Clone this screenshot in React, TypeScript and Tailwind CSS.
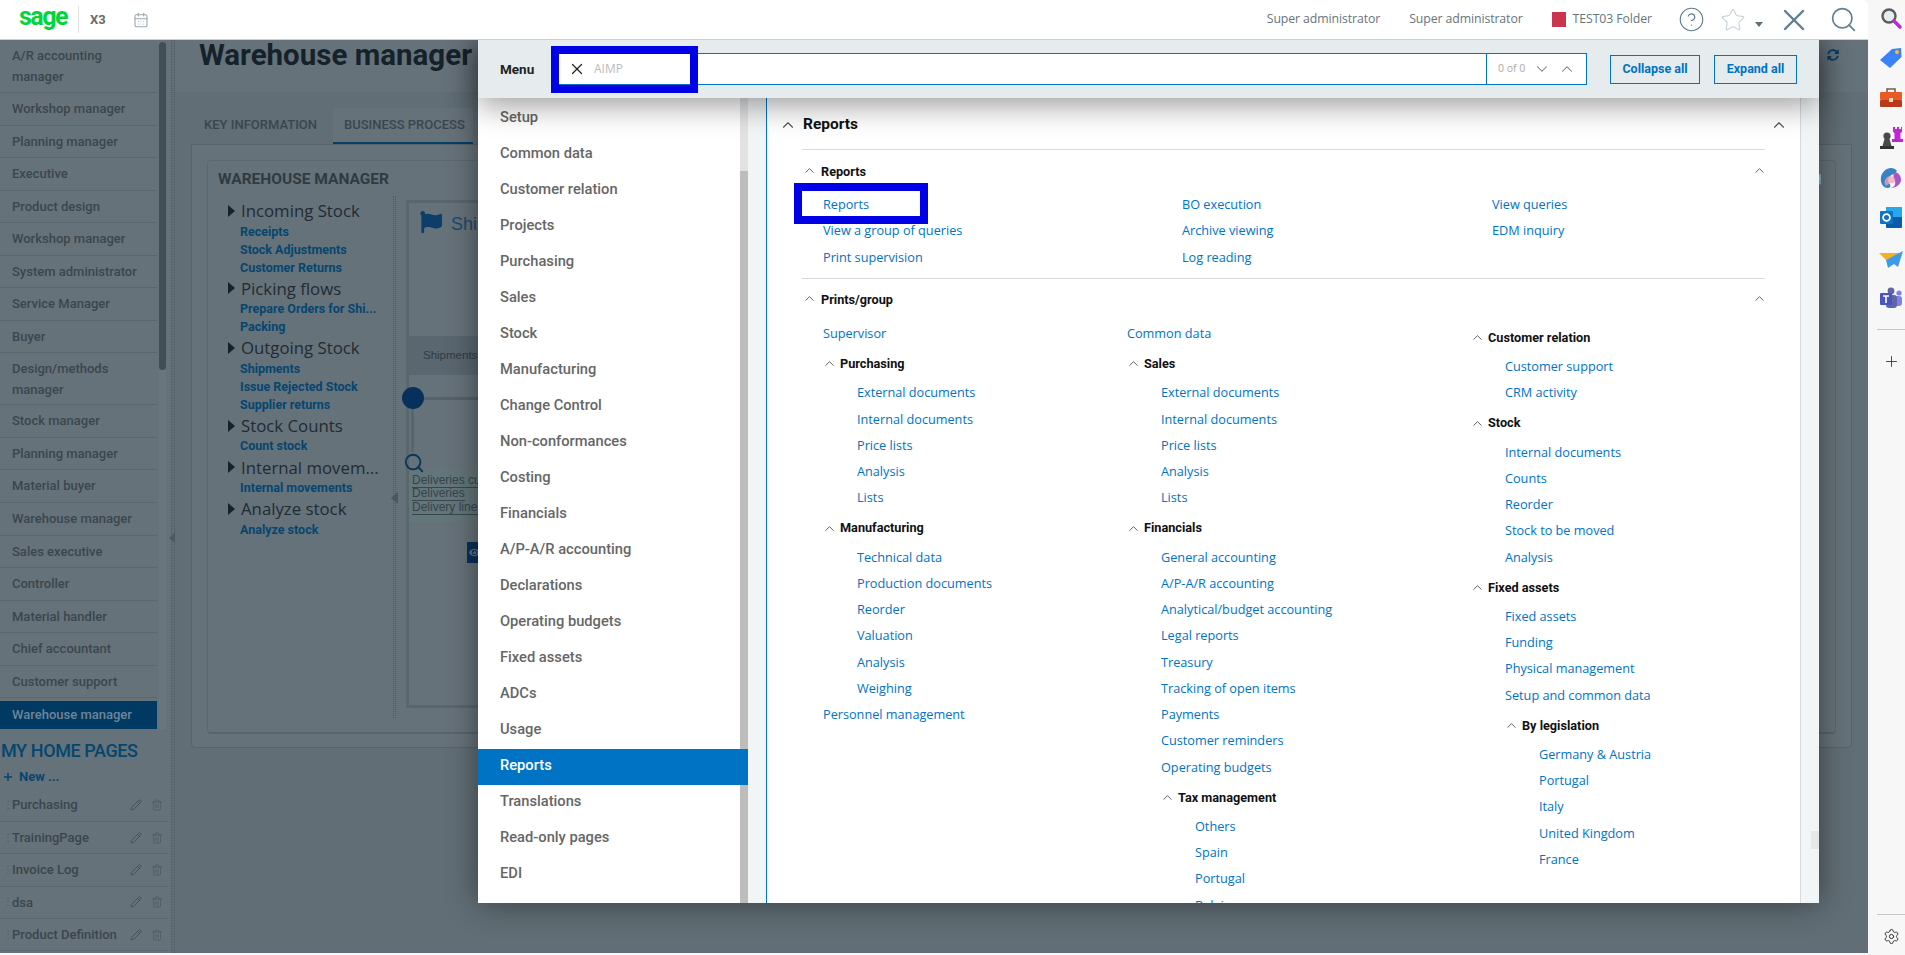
import { CalendarDays, ChevronDown, ChevronUp, Pencil, Plus, Search, Settings, Star, Trash2, X, CircleHelp } from 'lucide-react';
import { FaEye, FaFlag, FaSyncAlt } from 'react-icons/fa';

const OPEN = "font-['Open_Sans',sans-serif]";
const SAGE = "font-['Roboto',sans-serif]";

const roles = [
  'Workshop manager', 'Planning manager', 'Executive', 'Product design', 'Workshop manager',
  'System administrator', 'Service Manager', 'Buyer',
];
const roles2 = [
  'Stock manager', 'Planning manager', 'Material buyer', 'Warehouse manager', 'Sales executive',
  'Controller', 'Material handler', 'Chief accountant', 'Customer support',
];
const homePages = ['Purchasing', 'TrainingPage', 'Invoice Log', 'dsa', 'Product Definition'];

const flows = [
  { title: 'Incoming Stock', links: ['Receipts', 'Stock Adjustments', 'Customer Returns'] },
  { title: 'Picking flows', links: ['Prepare Orders for Shi...', 'Packing'] },
  { title: 'Outgoing Stock', links: ['Shipments', 'Issue Rejected Stock', 'Supplier returns'] },
  { title: 'Stock Counts', links: ['Count stock'] },
  { title: 'Internal movem...', links: ['Internal movements'] },
  { title: 'Analyze stock', links: ['Analyze stock'] },
];

const menu = [
  'Setup', 'Common data', 'Customer relation', 'Projects', 'Purchasing', 'Sales', 'Stock', 'Manufacturing',
  'Change Control', 'Non-conformances', 'Costing', 'Financials', 'A/P-A/R accounting', 'Declarations',
  'Operating budgets', 'Fixed assets', 'ADCs', 'Usage', 'Reports', 'Translations', 'Read-only pages', 'EDI',
];

type Node = { text: string; children?: Node[]; head?: boolean };

const l = (...names: string[]): Node[] => names.map((text) => ({ text }));

const col1: Node[] = [
  { text: 'Supervisor' },
  { text: 'Purchasing', head: true, children: l('External documents', 'Internal documents', 'Price lists', 'Analysis', 'Lists') },
  { text: 'Manufacturing', head: true, children: l('Technical data', 'Production documents', 'Reorder', 'Valuation', 'Analysis', 'Weighing') },
  { text: 'Personnel management' },
];
const col2: Node[] = [
  { text: 'Common data' },
  { text: 'Sales', head: true, children: l('External documents', 'Internal documents', 'Price lists', 'Analysis', 'Lists') },
  {
    text: 'Financials',
    head: true,
    children: [
      ...l('General accounting', 'A/P-A/R accounting', 'Analytical/budget accounting', 'Legal reports', 'Treasury', 'Tracking of open items', 'Payments', 'Customer reminders', 'Operating budgets'),
      { text: 'Tax management', head: true, children: l('Others', 'Spain', 'Portugal', 'Belgium') },
    ],
  },
];
const col3: Node[] = [
  { text: 'Customer relation', head: true, children: l('Customer support', 'CRM activity') },
  { text: 'Stock', head: true, children: l('Internal documents', 'Counts', 'Reorder', 'Stock to be moved', 'Analysis') },
  {
    text: 'Fixed assets',
    head: true,
    children: [
      ...l('Fixed assets', 'Funding', 'Physical management', 'Setup and common data'),
      { text: 'By legislation', head: true, children: l('Germany & Austria', 'Portugal', 'Italy', 'United Kingdom', 'France') },
    ],
  },
];

function TreeLink({ text }: { text: string }) {
  return <div className={`h-[26.25px] leading-[27px] text-[12.7px] text-[#0073c4] whitespace-nowrap ${OPEN}`}>{text}</div>;
}

function HeadLabel({ text }: { text: string }) {
  return <span className={`text-[12.7px] font-bold text-[#111] ${SAGE}`}>{text}</span>;
}

function Tree({ nodes }: { nodes: Node[] }) {
  return (
    <>
      {nodes.map((n) =>
        n.head ? (
          <div key={n.text}>
            <div className="flex h-[33px] items-center pt-[2px]">
              <ChevronUp className="h-[15px] w-[15px] -ml-px mr-[3px] text-[#555]" strokeWidth={1.5} />
              <HeadLabel text={n.text} />
            </div>
            <div className="pl-[34px]">
              <Tree nodes={n.children ?? []} />
            </div>
          </div>
        ) : (
          <TreeLink key={n.text} text={n.text} />
        ),
      )}
    </>
  );
}

function SidePanel() {
  return (
    <div className="flex h-[955px] w-[37px] flex-col items-center bg-[#f7f7f7]">
      <div className="flex flex-col items-center gap-[16px] pl-[9px] pt-[6px]">
        <svg viewBox="0 0 24 24" className="h-[24px] w-[24px]">
          <circle cx="10" cy="10" r="6.5" fill="#e4eef2" stroke="#5b5b5b" strokeWidth="2.4" />
          <path d="M15 15l6 6" stroke="#c026d3" strokeWidth="3.4" strokeLinecap="round" />
        </svg>
        <svg viewBox="0 0 24 24" className="h-[24px] w-[24px]">
          <path d="M1 14L13 3l9-1 .5 9L11 22z" fill="#3b82f6" />
          <circle cx="18" cy="6" r="2" fill="#fbbf24" />
        </svg>
        <svg viewBox="0 0 24 24" className="h-[24px] w-[24px]">
          <path d="M8 7V3h8v4" fill="none" stroke="#7a5c4d" strokeWidth="1.6" />
          <rect x="1" y="6" width="22" height="8" rx="1" fill="#ea5a25" />
          <rect x="1" y="14" width="22" height="7" rx="1" fill="#b9391a" />
          <rect x="10" y="12" width="4" height="4" fill="#f6d7b8" />
        </svg>
        <svg viewBox="0 0 24 24" className="h-[24px] w-[24px]">
          <circle cx="8" cy="10" r="3.6" fill="#4a4a4a" />
          <path d="M5.5 13h5l2 7h-9z" fill="#4a4a4a" />
          <rect x="1" y="20" width="14" height="3" fill="#333" />
          <path d="M14 1h2v2h2V1h2v2h2V1h1v5l-1.5 1v6H24v3H13v-3h2.5V7L14 6z" fill="#c026d3" />
        </svg>
        <svg viewBox="0 0 24 24" className="h-[24px] w-[24px]">
          <path d="M12 2c-5 0-9 4-10 9-1 6 2 11 7 11 3 0 3-3 1-5-2-3 0-8 5-9l3-3c-1-2-4-3-6-3z" fill="#3b82c4" />
          <path d="M16 6c4 1 6 4 6 8s-5 8-10 8c3-1 5-3 4-7-1-3-3-6 0-9z" fill="#a855c7" />
          <path d="M7 20c-3-3-1-9 4-10 4 0 5 3 5 5-1 3-4 2-5 2z" fill="#f0a3b5" opacity="0.75" />
        </svg>
        <svg viewBox="0 0 24 24" className="h-[24px] w-[24px]">
          <rect x="7" y="1" width="16" height="11" fill="#28a8ea" />
          <rect x="7" y="11" width="16" height="11" rx="1" fill="#0a5ca8" />
          <rect x="1" y="5" width="13" height="13" rx="1" fill="#0f72c4" />
          <circle cx="7.5" cy="11.5" r="3.4" fill="none" stroke="#fff" strokeWidth="1.8" />
        </svg>
        <svg viewBox="0 0 24 24" className="h-[24px] w-[24px]">
          <path d="M0 7h24L7 14z" fill="#f5b025" />
          <path d="M24 5L7 14l2 8 6-4 4 3z" fill="#3b9be8" />
        </svg>
        <svg viewBox="0 0 24 24" className="h-[24px] w-[24px]">
          <circle cx="12" cy="5" r="3.4" fill="#6264a7" />
          <circle cx="20" cy="7" r="2.6" fill="#7b83eb" />
          <rect x="13" y="10" width="10" height="10" rx="3" fill="#7b83eb" />
          <rect x="7" y="9" width="11" height="13" rx="3" fill="#6264a7" />
          <rect x="1" y="7" width="12" height="12" rx="1" fill="#4b53bc" />
          <path d="M4 10h6M7 10v7" stroke="#fff" strokeWidth="1.6" />
        </svg>
      </div>
      <div className="mt-[19px] h-px w-[28px] self-end bg-[#c8c8c8]" />
      <Plus className="ml-[9px] mt-[23px] h-[17px] w-[17px] text-[#333]" strokeWidth={1.25} />
      <div className="mt-auto h-px w-[28px] self-end bg-[#c8c8c8]" />
      <Settings className="ml-[9px] mb-[10px] mt-[13px] h-[17px] w-[17px] text-[#333]" strokeWidth={1.4} />
    </div>
  );
}

function TopBar() {
  return (
    <div className="relative z-40 flex h-[40px] items-center rounded-tr-md border-b border-[#c9d0d4] bg-white">
      <span className={`ml-[19px] w-[59px] text-[25px] font-bold leading-none tracking-[-1.5px] text-[#00d639] -mt-[6px] ${SAGE}`}>sage</span>
      <div className="h-[27px] w-px bg-[#e2e2e2]" />
      <span className={`ml-[11px] text-[13px] font-bold text-[#6b6b6b] ${SAGE}`}>X3</span>
      <CalendarDays className="ml-[27px] h-[16px] w-[16px] text-[#9aa7ad]" strokeWidth={1.6} />
      <div className={`ml-auto flex items-center text-[12.3px] text-[#66757d] ${OPEN}`}>
        <span className="tracking-[-0.1px]">Super administrator</span>
        <span className="ml-[29px] tracking-[-0.1px]">Super administrator</span>
        <span className="ml-[29px] h-[15px] w-[14px] bg-[#c9354f]" />
        <span className="ml-[7px] tracking-[-0.1px]">TEST03 Folder</span>
      </div>
      <CircleHelp className="ml-[26px] h-[27px] w-[27px] text-[#5f7a88]" strokeWidth={1} />
      <Star className="ml-[15px] h-[26px] w-[26px] text-[#c6d1d6]" strokeWidth={1} />
      <span className="ml-[9px] mt-[9px] h-0 w-0 border-x-[4px] border-t-[5px] border-x-transparent border-t-[#5f6f78]" />
      <X className="ml-[13px] h-[36px] w-[36px] text-[#5f7f92]" strokeWidth={1.6} />
      <Search className="ml-[17px] mr-[10px] h-[29px] w-[29px] text-[#5f7f92]" strokeWidth={1.4} />
    </div>
  );
}

function Sidebar() {
  const item = `border-b border-[#5b676e] pl-[12px] text-[13px] font-medium text-[#3a464e] ${SAGE}`;
  return (
    <div className="w-[171px] shrink-0 bg-[#667279]">
      <div className="flex h-[690px]">
        <div className="w-[157px]">
          <div className={`${item} h-[53px] pt-[5px] leading-[21px]`}>A/R accounting<br />manager</div>
          {roles.map((r, i) => (
            <div key={i} className={`${item} flex h-[32.55px] items-center`}>{r}</div>
          ))}
          <div className={`${item} h-[52px] pt-[5px] leading-[21px]`}>Design/methods<br />manager</div>
          {roles2.map((r, i) => (
            <div key={i} className={`${item} flex h-[32.55px] items-center`}>{r}</div>
          ))}
          <div className={`mt-[3px] flex h-[28px] items-center bg-[#003a63] pl-[12px] pb-[1px] text-[13px] font-medium text-[#6f8596] ${SAGE}`}>Warehouse manager</div>
        </div>
        <div className="ml-[2px] mt-[2px] h-[688px] w-[7px] rounded bg-[#6a767c]">
          <div className="h-[328px] w-full rounded bg-[#434e54]" />
        </div>
      </div>
      <div className={`mt-[10px] pl-px text-[18px] font-medium leading-[22px] tracking-[-0.4px] text-[#05466f] ${SAGE}`}>MY HOME PAGES</div>
      <div className={`mt-[5px] flex items-center gap-[5px] pl-[2px] text-[13px] font-bold text-[#05466f] ${SAGE}`}>
        <Plus className="h-[12px] w-[12px]" strokeWidth={3} />
        New ...
      </div>
      <div className="mt-[3px] w-[168px]">
        {homePages.map((p) => (
          <div key={p} className={`flex h-[32.4px] items-center border-b border-[#5b676e] pl-[3px] text-[13px] font-medium text-[#3a464e] ${SAGE}`}>
            <span className="w-[9px] leading-[6px] text-[10px] text-[#4c585f]">⋮</span>
            <span className="flex-1">{p}</span>
            <Pencil className="h-[12px] w-[12px] text-[#3f4a52]" strokeWidth={1.6} />
            <Trash2 className="ml-[9px] mr-[5px] h-[12px] w-[12px] text-[#4c585f]" strokeWidth={1.4} />
          </div>
        ))}
      </div>
    </div>
  );
}

function WarehouseBox() {
  return (
    <div className="mt-[4px] h-[508px] flex-1 border-[3px] border-[#59666c] mr-[30px] ml-[10px]">
      <div className="flex h-[133px] items-start pl-[11px] pt-[8px]">
        <FaFlag className="h-[22px] w-[22px] text-[#0c3e69]" />
        <span className="ml-[9px] text-[18px] text-[#1b4a6d] font-['Liberation_Sans',sans-serif]">Shipments</span>
      </div>
      <div className="flex h-[39px] items-center bg-[#5a6770] pl-[14px] text-[11.5px] text-[#2f3c44] font-['Liberation_Sans',sans-serif]">Shipments</div>
      <div className="mt-[12px] flex items-center">
        <span className="h-[22px] w-[22px] -ml-[7px] rounded-full bg-[#08305c]" />
        <span className="h-[3px] flex-1 bg-[#55626a]" />
      </div>
      <div className="ml-[2px] h-[43px] w-[3px] bg-[#58656c]" />
      <Search className="-ml-[6px] h-[22px] w-[22px] text-[#0b3658]" strokeWidth={2} />
      <div className="-mt-[5px] h-[53px] bg-[#63767a] pl-[3px] pt-[5px] text-[12px] leading-[13.3px] text-[#36444a] font-['Liberation_Sans',sans-serif]">
        <div><span className="border-b border-[#39474d]">Deliveries current</span></div>
        <div><span className="border-b border-[#39474d]">Deliveries</span></div>
        <div><span className="border-b border-[#39474d]">Delivery lines</span></div>
      </div>
      <div className="ml-[58px] mt-[20px] flex h-[21px] w-[60px] items-center bg-[#08305c] pl-[2px]">
        <FaEye className="h-[11px] w-[11px] text-[#60747f]" />
      </div>
    </div>
  );
}

function MainPage() {
  return (
    <div className="flex-1 overflow-hidden bg-[#616e75]">
      <div className="h-[52px] w-full bg-[#66727a] pl-[24px]">
        <div className={`text-[29.5px] font-bold leading-[30px] text-[#16222b] ${SAGE}`}>Warehouse manager</div>
      </div>
      <div className="mx-[16px] mt-[16px]">
        <div className={`flex h-[36px] text-[13px] font-medium ${SAGE}`}>
          <div className="flex w-[142px] items-center pb-[3px] pl-[13px] text-[#3a464e]">KEY INFORMATION</div>
          <div className="flex w-[140px] items-center border-b-[2px] border-[#063f69] bg-[#66727a] pb-[1px] pl-[11px] text-[#3a464e]">BUSINESS PROCESS</div>
        </div>
        <div className="h-[604px] rounded-b border border-[#57646b] bg-[#66727a] px-[15px] pt-[15px]">
          <div className="flex h-[574px] flex-col rounded border border-b-2 border-[#5c686f] border-b-[#57646b] bg-[#66727a]">
            <div className="flex h-[35px] items-center justify-between pl-[10px] pr-[12px] pt-[2px]">
              <span className={`text-[15.5px] font-bold text-[#2f3b43] ${SAGE}`}>WAREHOUSE MANAGER</span>
              <span className="text-[10px] font-bold text-[#1d2931]">↗</span>
            </div>
            <div className="flex flex-1">
              <div className="w-[185px] pl-[20px] pt-[3px]">
                {flows.map((f) => (
                  <div key={f.title}>
                    <div className={`flex h-[23.6px] items-center text-[16.8px] font-medium text-[#1f2b33] ${OPEN}`}>
                      <span className="mr-[6px] h-0 w-0 border-y-[6px] border-l-[7px] border-y-transparent border-l-[#16222b]" />
                      <span className="whitespace-nowrap">{f.title}</span>
                    </div>
                    <div className={`pl-[12px] text-[12.5px] font-bold leading-[18px] text-[#05466f] ${SAGE}`}>
                      {f.links.map((x) => (
                        <div key={x} className="whitespace-nowrap">{x}</div>
                      ))}
                    </div>
                  </div>
                ))}
              </div>
              <div className="mb-[14px] flex w-[3px] items-center border-x border-dotted border-[#505c63]">
                <span className="-ml-[3px] mt-[82px] h-0 w-0 border-y-[6px] border-r-[7px] border-y-transparent border-r-[#4c585f]" />
              </div>
              <WarehouseBox />
            </div>
          </div>
        </div>
      </div>
    </div>
  );
}

function MenuModal() {
  const columns = [
    { w: 'w-[304px]', nodes: col1 },
    { w: 'w-[344px]', nodes: col2 },
    { w: 'flex-1', nodes: col3 },
  ];
  return (
    <div className="absolute left-[478px] top-0 z-20 flex h-[863px] w-[1341px] flex-col bg-[#f2f5f6] shadow-[0_0_30px_rgba(0,0,0,0.45)]">
      <div className="relative z-10 flex h-[58px] shrink-0 items-center bg-[#e6ebed] shadow-[0_8px_30px_rgba(0,0,0,0.38)]">
        <span className={`ml-[22px] w-[53px] text-[13.5px] font-bold text-[#222] ${SAGE}`}>Menu</span>
        <div className="flex h-[32px] w-[1034px] items-center border border-[#0073c4] bg-white">
          <X className="ml-[14px] h-[18px] w-[18px] text-[#222]" strokeWidth={1.6} />
          <span className={`ml-[8px] text-[12px] text-[#bbb] ${OPEN}`}>AIMP</span>
          <div className="ml-auto flex h-full w-[100px] items-center border-l border-[#0073c4] pl-[11px]">
            <span className={`text-[10.5px] text-[#aaa] ${OPEN}`}>0 of 0</span>
            <ChevronDown className="ml-[8px] h-[18px] w-[18px] text-[#777]" strokeWidth={1.4} />
            <ChevronUp className="ml-[7px] h-[18px] w-[18px] text-[#777]" strokeWidth={1.4} />
          </div>
        </div>
        <button className={`ml-[23px] h-[29px] w-[90px] border border-[#0073c4] text-[12.5px] font-bold text-[#0073c4] ${SAGE}`}>Collapse all</button>
        <button className={`ml-[14px] h-[29px] w-[83px] border border-[#0073c4] text-[12.5px] font-bold text-[#0073c4] ${SAGE}`}>Expand all</button>
      </div>
      <div className="flex min-h-0 flex-1">
        <div className="relative w-[270px] overflow-hidden bg-white">
          <div className="pt-[3px]">
            {menu.map((m) => (
              <div
                key={m}
                className={`relative z-[1] flex h-[36px] items-center pb-[4px] pl-[22px] text-[14.7px] font-medium ${SAGE} ${m === 'Reports' ? 'bg-[#0073c4] font-bold text-white' : 'text-[#666]'}`}
              >
                {m}
              </div>
            ))}
          </div>
          <div className="absolute right-0 top-0 h-full w-[8px] bg-[#bdbdbd]">
            <div className="h-[73px] w-full bg-[#e2e2e2]" />
          </div>
        </div>
        <div className="ml-[18px] w-[1035px] overflow-hidden border-x border-l-[#0073c4] border-r-[#d5dbdf] bg-white">
          <div className="mx-[35px] w-[963px]">
            <div className="-ml-[22px] -mr-[22px] flex h-[51px] items-center pt-[3px]">
              <ChevronUp className="h-[18px] w-[18px] -ml-[1px] text-[#555]" strokeWidth={1.5} />
              <span className={`ml-[6px] flex-1 text-[15.5px] font-bold text-[#111] ${SAGE}`}>Reports</span>
              <ChevronUp className="h-[18px] w-[18px] -mr-[1px] text-[#555]" strokeWidth={1.5} />
            </div>
            <div className="border-t border-[#d5dbdf]" />
            <div className="-mr-[2px] flex h-[41px] items-center pb-[1px]">
              <ChevronUp className="h-[15px] w-[15px] text-[#555]" strokeWidth={1.5} />
              <span className="ml-[4px] flex-1"><HeadLabel text="Reports" /></span>
              <ChevronUp className="h-[15px] w-[15px] text-[#555]" strokeWidth={1.5} />
            </div>
            <div className="grid h-[87px] grid-cols-[359px_310px_1fr] pl-[21px]">
              <div><TreeLink text="Reports" /><TreeLink text="View a group of queries" /><TreeLink text="Print supervision" /></div>
              <div><TreeLink text="BO execution" /><TreeLink text="Archive viewing" /><TreeLink text="Log reading" /></div>
              <div><TreeLink text="View queries" /><TreeLink text="EDM inquiry" /></div>
            </div>
            <div className="border-t border-[#d5dbdf]" />
            <div className="-mr-[2px] flex h-[41px] items-center pb-[3px]">
              <ChevronUp className="h-[15px] w-[15px] text-[#555]" strokeWidth={1.5} />
              <span className="ml-[4px] flex-1"><HeadLabel text="Prints/group" /></span>
              <ChevronUp className="h-[15px] w-[15px] text-[#555]" strokeWidth={1.5} />
            </div>
            <div className="flex pl-[21px]">
              {columns.map((c, i) => (
                <div key={i} className={c.w}>
                  <Tree nodes={c.nodes} />
                </div>
              ))}
            </div>
          </div>
        </div>
        <div className="ml-[10px] mt-[733px] h-[18px] w-[8px] bg-[#e4e7e8]" />
      </div>
      {/* blue annotation boxes from the guide */}
      <div className="absolute left-[73px] top-[6px] z-20 h-[47px] w-[147px] border-[8px] border-[#0000e6]" />
      <div className="absolute left-[316px] top-[143px] z-20 h-[41px] w-[134px] border-[8px] border-[#0000e6]" />
    </div>
  );
}

export default function App() {
  return (
    <div className="flex h-[955px] w-[1905px] overflow-hidden bg-[#f7f7f7]">
      <div className="flex w-[1868px] flex-col">
        <TopBar />
        <div className="relative flex h-[913px] rounded-br-[10px] bg-[#616e75]">
          <Sidebar />
          <div className="flex w-[4px] shrink-0 items-center border-x border-dotted border-[#505c63]">
            <span className="-ml-[3px] mt-[82px] h-0 w-0 border-y-[6px] border-r-[7px] border-y-transparent border-r-[#4c585f]" />
          </div>
          <MainPage />
          <MenuModal />
          <FaSyncAlt className="absolute left-[1827px] top-[9px] z-30 h-[12px] w-[12px] text-[#05375c]" />
        </div>
      </div>
      <SidePanel />
    </div>
  );
}
